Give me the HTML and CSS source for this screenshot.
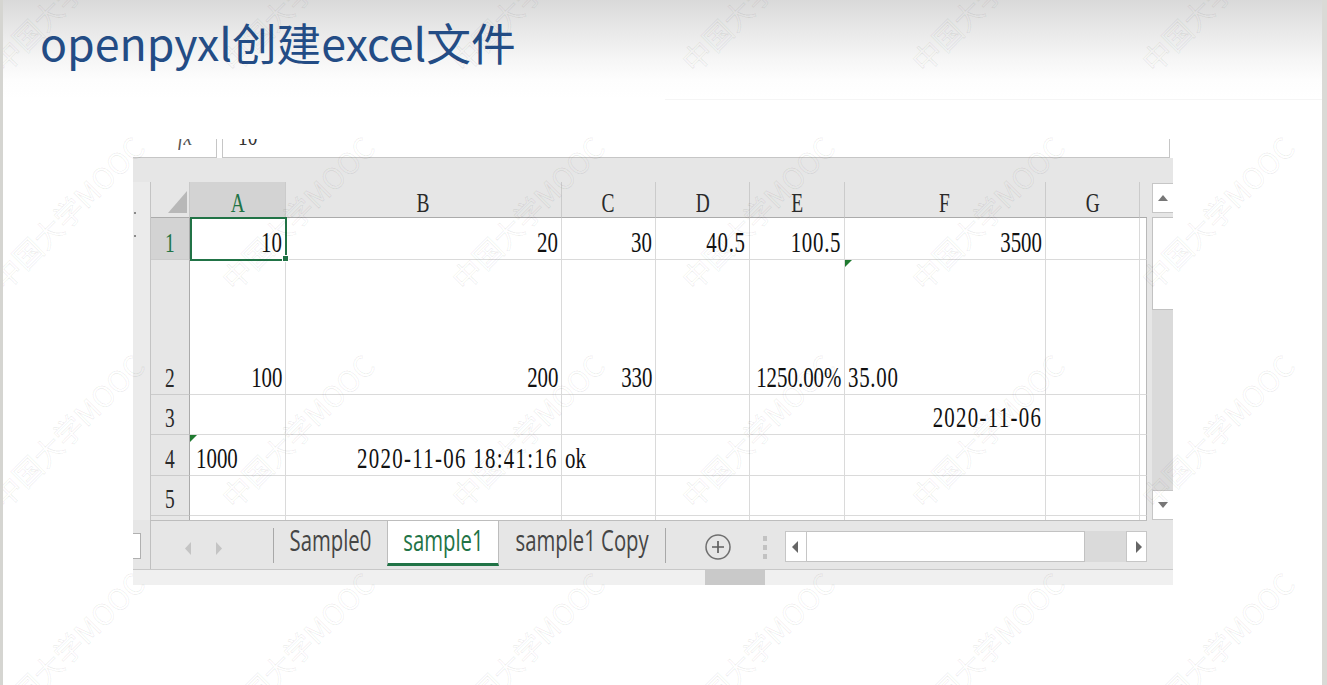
FILE: index.html
```html
<!DOCTYPE html>
<html lang="zh">
<head>
<meta charset="utf-8">
<title>openpyxl创建excel文件</title>
<link rel="stylesheet" href="styles.css">
</head>
<body>
<div class="slide">
  <header class="title-band">
    <h1 class="title">openpyxl创建excel文件</h1>
  </header>
  <div class="band-line"></div>

  <div class="shot">
    <div class="formula">
      <div class="fx-box"><span class="fx">fx</span></div>
      <div class="fx-gap"></div>
      <div class="fx-input"><span class="fx-val">10</span></div>
      <div class="fx-end"></div>
    </div>
    <div class="toolgap"></div>

    <div class="middle">
      <div class="lm"><i class="dot d1"></i><i class="dot d2"></i></div>
      <div class="grid">
        <div class="corner"><svg width="38" height="35" viewBox="0 0 38 35"><polygon points="17,31 36,31 36,9" fill="#b8b8b8"/></svg></div>
        <div class="ch sel"><span class="t">A</span></div>
        <div class="ch"><span class="t">B</span></div>
        <div class="ch"><span class="t">C</span></div>
        <div class="ch"><span class="t">D</span></div>
        <div class="ch"><span class="t">E</span></div>
        <div class="ch"><span class="t">F</span></div>
        <div class="ch"><span class="t">G</span></div>
        <div class="ch edge"></div>

        <div class="rh sel"><span class="t">1</span></div>
        <div class="c r"><span class="v">10</span></div>
        <div class="c r"><span class="v">20</span></div>
        <div class="c r"><span class="v">30</span></div>
        <div class="c r"><span class="v sp">40.5</span></div>
        <div class="c r"><span class="v sp">100.5</span></div>
        <div class="c r"><span class="v">3500</span></div>
        <div class="c"></div>
        <div class="c edge"></div>

        <div class="rh"><span class="t">2</span></div>
        <div class="c r"><span class="v">100</span></div>
        <div class="c r"><span class="v">200</span></div>
        <div class="c r"><span class="v">330</span></div>
        <div class="c"></div>
        <div class="c r"><span class="v">1250.00%</span></div>
        <div class="c l flag"><span class="v sp">35.00</span></div>
        <div class="c"></div>
        <div class="c edge"></div>

        <div class="rh"><span class="t">3</span></div>
        <div class="c"></div>
        <div class="c"></div>
        <div class="c"></div>
        <div class="c"></div>
        <div class="c"></div>
        <div class="c r"><span class="v dt">2020-11-06</span></div>
        <div class="c"></div>
        <div class="c edge"></div>

        <div class="rh"><span class="t">4</span></div>
        <div class="c l flag inset"><span class="v">1000</span></div>
        <div class="c r"><span class="v dt">2020-11-06 18:41:16</span></div>
        <div class="c l"><span class="v">ok</span></div>
        <div class="c"></div>
        <div class="c"></div>
        <div class="c"></div>
        <div class="c"></div>
        <div class="c edge"></div>

        <div class="rh"><span class="t">5</span></div>
        <div class="c"></div>
        <div class="c"></div>
        <div class="c"></div>
        <div class="c"></div>
        <div class="c"></div>
        <div class="c"></div>
        <div class="c"></div>
        <div class="c edge"></div>

        <div class="rh last"></div>
        <div class="c last"></div>
        <div class="c last"></div>
        <div class="c last"></div>
        <div class="c last"></div>
        <div class="c last"></div>
        <div class="c last"></div>
        <div class="c last"></div>
        <div class="c edge last"></div>

        <div class="selection"></div>
        <div class="handle"></div>
      </div>
      <div class="vgap"></div>
      <div class="vscroll">
        <div class="vbtn"><svg width="12" height="8" viewBox="0 0 12 8"><polygon points="1,7 11,7 6,1" fill="#777"/></svg></div>
        <div class="vthumb"></div>
        <div class="vtrack"></div>
        <div class="vbtn"><svg width="12" height="8" viewBox="0 0 12 8"><polygon points="1,1 11,1 6,7" fill="#777"/></svg></div>
      </div>
    </div>

    <div class="tabbar">
      <div class="tb-left"><div class="namebox"></div></div>
      <div class="tb-main">
        <div class="nav">
          <svg class="arr" width="7" height="13" viewBox="0 0 7 13"><polygon points="6,0 6,13 0,6.5" fill="#c4c4c4"/></svg>
          <svg class="arr" width="7" height="13" viewBox="0 0 7 13"><polygon points="0,0 0,13 6,6.5" fill="#c4c4c4"/></svg>
        </div>
        <div class="sep"></div>
        <div class="tab s0"><span class="tt">Sample0</span></div>
        <div class="tab active"><span class="tt">sample1</span></div>
        <div class="tab s2"><span class="tt">sample1 Copy</span></div>
        <div class="sep"></div>
        <div class="plus"><svg width="28" height="28" viewBox="0 0 28 28"><circle cx="14" cy="14" r="12" fill="none" stroke="#6f6f6f" stroke-width="1.5"/><path d="M14 8 V20 M8 14 H20" stroke="#5f5f5f" stroke-width="1.7"/></svg></div>
        <div class="dots"><i></i><i></i><i></i></div>
        <div class="hscroll">
          <div class="hb"><svg width="7" height="12" viewBox="0 0 7 12"><polygon points="6,0 6,12 0,6" fill="#666"/></svg></div>
          <div class="hthumb"></div>
          <div class="htrack"></div>
          <div class="hb hb-r"><svg width="7" height="12" viewBox="0 0 7 12"><polygon points="1,0 1,12 7,6" fill="#666"/></svg></div>
        </div>
      </div>
      <div class="tb-right"></div>
    </div>
    <div class="status"><div class="st-thumb"></div></div>
  </div>

  <div class="watermarks">
    <div class="wm-grid">
      <span class="wm">中国大学MOOC</span><span class="wm">中国大学MOOC</span><span class="wm">中国大学MOOC</span><span class="wm">中国大学MOOC</span><span class="wm">中国大学MOOC</span><span class="wm">中国大学MOOC</span><span class="wm">中国大学MOOC</span>
      <span class="wm">中国大学MOOC</span><span class="wm">中国大学MOOC</span><span class="wm">中国大学MOOC</span><span class="wm">中国大学MOOC</span><span class="wm">中国大学MOOC</span><span class="wm">中国大学MOOC</span><span class="wm">中国大学MOOC</span>
      <span class="wm">中国大学MOOC</span><span class="wm">中国大学MOOC</span><span class="wm">中国大学MOOC</span><span class="wm">中国大学MOOC</span><span class="wm">中国大学MOOC</span><span class="wm">中国大学MOOC</span><span class="wm">中国大学MOOC</span>
      <span class="wm">中国大学MOOC</span><span class="wm">中国大学MOOC</span><span class="wm">中国大学MOOC</span><span class="wm">中国大学MOOC</span><span class="wm">中国大学MOOC</span><span class="wm">中国大学MOOC</span><span class="wm">中国大学MOOC</span>
    </div>
  </div>
</div>
</body>
</html>
```

FILE: styles.css
```css
* { box-sizing: border-box; margin: 0; padding: 0; }
html, body { width: 1327px; height: 685px; overflow: hidden; background: #fff; }

.slide {
  position: relative;
  width: 1327px;
  height: 685px;
  border-left: 3px solid #d5d5d1;
  border-right: 5px solid #dadad6;
  background: #fff;
  overflow: hidden;
}

.title-band {
  height: 99px;
  padding: 20px 0 0 37px;
  background: linear-gradient(to bottom, #d9d9d9 0px, #e8e8e8 30px, #f6f6f6 60px, #fdfdfd 80px, #ffffff 99px);
}
.title {
  font-family: "Noto Sans CJK SC", "Open Sans", sans-serif;
  font-weight: 400;
  font-size: 44.7px;
  line-height: 44px;
  color: #234c85;
  white-space: nowrap;
}
.band-line { height: 1px; margin-left: 662px; background: #f5f5f5; }

/* ---------- spreadsheet picture ---------- */
.shot {
  width: 1040px;
  margin: 39px 0 0 130px;
  display: flex;
  flex-direction: column;
  overflow: hidden;
}

.formula { height: 19px; display: flex; background: #fff; overflow: hidden; }
.fx-box {
  width: 84px;
  border-right: 1px solid #c6c6c6;
  border-bottom: 1px solid #c6c6c6;
  padding-left: 45px;
  overflow: hidden;
}
.fx, .fx-val {
  display: block;
  font-family: "Liberation Serif", serif;
  font-size: 26px;
  line-height: 26px;
  margin-top: -15px;
  color: #555;
  transform: scaleX(0.75);
  transform-origin: left;
  white-space: nowrap;
}
.fx { font-style: italic; }
.fx-val { color: #333; }
.fx-gap { width: 5px; }
.fx-input {
  width: 948px;
  border-left: 1px solid #c6c6c6;
  border-right: 1px solid #c6c6c6;
  border-bottom: 1px solid #c6c6c6;
  padding-left: 15px;
  overflow: hidden;
}
.fx-end { width: 3px; }

.toolgap { height: 24px; background: #e6e6e6; }

.middle { height: 338px; display: flex; background: #e6e6e6; }
.lm { width: 17px; background: #ebebeb; position: relative; }
.dot { position: absolute; left: 1px; width: 2px; height: 2px; background: #8a8a8a; }
.d1 { top: 30px; }
.d2 { top: 53px; }

.grid {
  position: relative;
  width: 997px;
  border-left: 1px solid #c4c4c4;
  background: #fff;
  display: grid;
  grid-template-columns: 39px 96px 276px 94px 94px 95px 201px 94px 7px;
  grid-template-rows: 36px 42px 135px 40px 41px 40px 4px;
}

.corner { background: #e6e6e6; border-right: 1px solid #c9c9c9; border-bottom: 1px solid #ababab; }
.corner svg { display: block; }

.ch {
  background: #e6e6e6;
  border-right: 1px solid #cbcbcb;
  border-bottom: 1px solid #ababab;
  display: flex;
  justify-content: center;
  align-items: flex-end;
}
.ch.edge { border-right: none; }
.ch.sel, .rh.sel { background: #d3d3d3; }

.rh {
  background: #e6e6e6;
  border-right: 1px solid #ababab;
  border-bottom: 1px solid #cbcbcb;
  display: flex;
  justify-content: center;
  align-items: flex-end;
  padding-bottom: 2px;
}
.rh.last { border-bottom: none; }

.t {
  display: inline-block;
  font-family: "Liberation Serif", serif;
  font-size: 27px;
  line-height: 28px;
  color: #2a2a2a;
  transform: scaleX(0.72);
  transform-origin: center;
  white-space: nowrap;
}
.sel .t { color: #217346; }

.c {
  position: relative;
  border-right: 1px solid #dadada;
  border-bottom: 1px solid #dadada;
  display: flex;
  align-items: flex-end;
  padding-bottom: 2px;
}
.c.edge { border-right: 1px solid #b9b9b9; }
.c.last { border-bottom: none; }
.c.r { justify-content: flex-end; padding-right: 3px; }
.c.l { justify-content: flex-start; padding-left: 3px; }
.c.l.inset { padding-left: 6px; }

.v {
  display: inline-block;
  font-family: "Liberation Serif", serif;
  font-size: 29px;
  line-height: 30px;
  color: #111;
  white-space: nowrap;
  transform: scaleX(0.72);
}
.r .v { transform-origin: right; }
.l .v { transform-origin: left; }
.sp { letter-spacing: 1px; }
.dt { letter-spacing: 1.8px; }

.flag::before {
  content: "";
  position: absolute;
  top: 0;
  left: 0;
  border-top: 7px solid #1f7a30;
  border-right: 7px solid transparent;
}

.selection {
  position: absolute;
  left: 39px;
  top: 35px;
  width: 97px;
  height: 44px;
  border: 2px solid #217346;
  pointer-events: none;
}
.handle {
  position: absolute;
  left: 131px;
  top: 73px;
  width: 7px;
  height: 7px;
  background: #217346;
  border: 1px solid #fff;
}

.vgap { width: 5px; }
.vscroll { width: 21px; padding-top: 1px; display: flex; flex-direction: column; }
.vbtn {
  height: 30px;
  background: #fff;
  border: 1px solid #c6c6c6;
  border-right: none;
  display: flex;
  align-items: center;
  justify-content: center;
}
.vthumb { height: 93px; margin-top: 4px; background: #fff; border: 1px solid #c2c2c2; border-right: none; }
.vtrack { flex: 1; background: #dadada; }

/* ---------- sheet tabs ---------- */
.tabbar {
  height: 50px;
  display: flex;
  background: #e6e6e6;
  border-bottom: 1px solid #c8c8c8;
}
.tb-left { width: 17px; }
.namebox {
  width: 8px;
  height: 26px;
  margin-top: 13px;
  background: #fff;
  border: 1px solid #b0b0b0;
  border-left: none;
}
.tb-main {
  width: 997px;
  border-left: 1px solid #c0c0c0;
  border-top: 1px solid #bdbdbd;
  display: flex;
  align-items: flex-start;
}
.nav { width: 122px; display: flex; gap: 24px; padding: 21px 0 0 34px; }
.arr { display: block; }
.sep { width: 1px; height: 35px; margin-top: 7px; background: #a8a8a8; }
.tab {
  height: 45px;
  display: flex;
  justify-content: center;
  align-items: flex-start;
}
.s0 { width: 113px; }
.active {
  width: 112px;
  background: #fff;
  border-left: 1px solid #bdbdbd;
  border-right: 1px solid #bdbdbd;
  border-bottom: 3px solid #217346;
}
.s2 { width: 166px; }
.tt {
  display: inline-block;
  font-family: "Open Sans", "Liberation Sans", sans-serif;
  font-size: 29px;
  line-height: 40px;
  margin-top: -1px;
  color: #454545;
  white-space: nowrap;
  transform: scaleX(0.7);
  transform-origin: center;
}
.active .tt { color: #217346; }

.plus { margin: 12px 0 0 38px; width: 28px; height: 28px; }
.plus svg { display: block; }
.dots { margin: 15px 0 0 31px; width: 4px; display: flex; flex-direction: column; gap: 4px; }
.dots i { display: block; width: 4px; height: 5px; background: #c2c2c2; }

.hscroll { margin: 10px 0 0 18px; width: 362px; height: 31px; display: flex; }
.hb {
  width: 22px;
  background: #fff;
  border: 1px solid #c6c6c6;
  display: flex;
  align-items: center;
  padding-left: 6px;
}
.hb-r { width: 21px; padding-left: 8px; }
.hthumb { width: 278px; background: #fff; border: 1px solid #c2c2c2; border-left: none; }
.htrack { width: 41px; background: #dadada; }
.tb-right { width: 26px; }

.status { height: 15px; background: #f0f0f0; }
.st-thumb { margin-left: 572px; width: 60px; height: 15px; background: #c9c9c9; }

/* ---------- watermark overlay ---------- */
.watermarks {
  position: absolute;
  inset: 0;
  pointer-events: none;
  overflow: hidden;
}
.wm-grid {
  position: absolute;
  left: -51px;
  top: -115px;
  display: grid;
  grid-template-columns: repeat(7, 230px);
  grid-template-rows: repeat(4, 218px);
  place-items: center;
}
.wm {
  display: block;
  font-family: "Noto Sans CJK SC", "Open Sans", sans-serif;
  font-size: 29px;
  font-weight: 400;
  line-height: 32px;
  white-space: nowrap;
  color: transparent;
  -webkit-text-stroke: 1px rgba(0, 0, 0, 0.065);
  transform: rotate(-45deg);
}
```
